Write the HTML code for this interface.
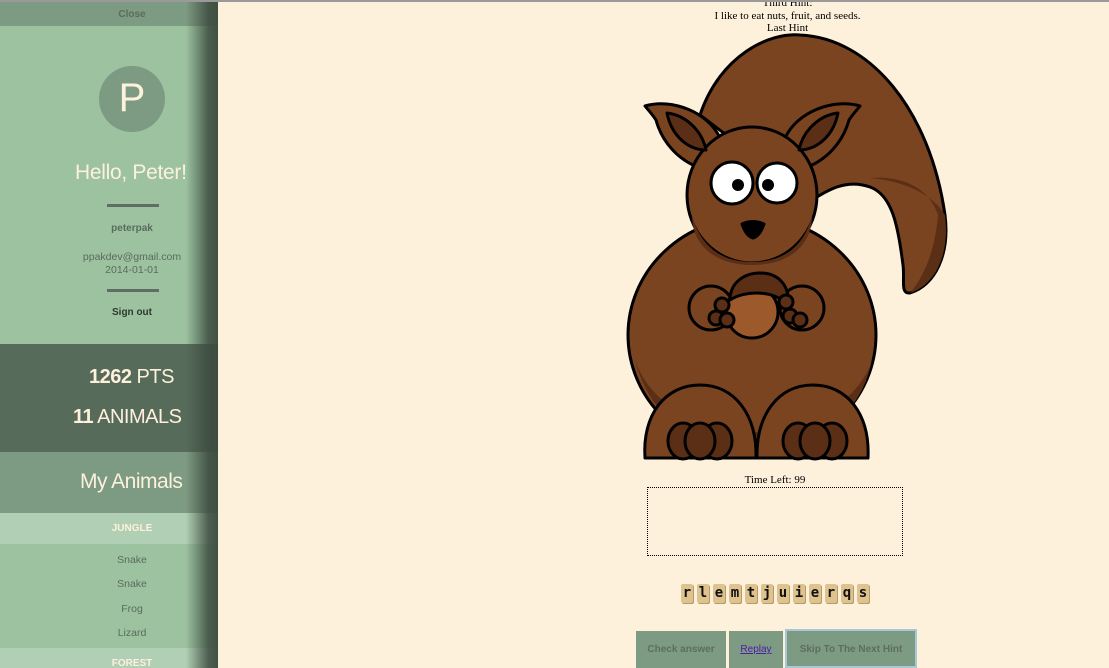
<!DOCTYPE html>
<html><head><meta charset="utf-8"><style>
*{margin:0;padding:0;box-sizing:border-box}
body{width:1109px;height:668px;overflow:hidden;background:#fdf1dc;position:relative;font-family:"Liberation Sans",sans-serif}
.topline{position:absolute;left:0;top:0;width:1109px;height:2px;background:#9a9a9a;z-index:5}
#side{position:absolute;left:0;top:0;width:218px;height:668px;background:#9cc2a0;overflow:hidden}
.abs{position:absolute}
.c{text-align:center}
.shadow{position:absolute;left:186px;top:0;width:32px;height:668px;background:linear-gradient(to right,rgba(60,75,62,0),rgba(60,75,62,.85) 70%,rgba(60,75,62,.95));z-index:3}
.tile{display:inline-block;width:12px;height:19px;background:#dfc38e;border-radius:2px;box-shadow:1px 1px 0 #b89a66;font:bold 14px "DejaVu Sans Mono","Liberation Mono",monospace;line-height:19px;text-align:center;color:#111;margin:0 2px}
.btn{position:absolute;top:631px;height:37px;background:#7d9a82;color:#5d6e5f;font:bold 10px "Liberation Sans",sans-serif;text-align:center;line-height:37px}
</style></head><body>
<div class="topline"></div>
<div id="side">
  <div class="abs c" style="left:0;top:2px;width:264px;height:24px;background:#7d9a82;color:#5a6c5c;font-size:10px;font-weight:bold;line-height:26px">Close</div>
  <div class="abs c" style="left:99px;top:66px;width:66px;height:66px;border-radius:50%;background:#7d9a82;color:#fdf1dc;font-size:40px;line-height:64px">P</div>
  <div class="abs" style="left:75px;top:161px;color:#fdf1dc;font-size:21px;letter-spacing:-0.3px">Hello, Peter!</div>
  <div class="abs" style="left:107px;top:204px;width:52px;height:3px;background:#5f6e60"></div>
  <div class="abs c" style="left:0;top:223px;width:264px;color:#5a6c5c;font-size:10px;font-weight:bold">peterpak</div>
  <div class="abs c" style="left:0;top:251px;width:264px;color:#5a6c5c;font-size:10.5px;line-height:13px">ppakdev@gmail.com<br>2014-01-01</div>
  <div class="abs" style="left:107px;top:289px;width:52px;height:3px;background:#5f6e60"></div>
  <div class="abs c" style="left:0;top:307px;width:264px;color:#2e3a30;font-size:10px;font-weight:bold">Sign out</div>
  <div class="abs" style="left:0;top:344px;width:264px;height:108px;background:#576b5b"></div>
  <div class="abs" style="left:89px;top:366px;color:#fdf1dc;font-size:20px;letter-spacing:-0.5px"><b>1262</b> PTS</div>
  <div class="abs" style="left:73px;top:406px;color:#fdf1dc;font-size:20px;letter-spacing:-0.5px"><b>11</b> ANIMALS</div>
  <div class="abs" style="left:0;top:452px;width:264px;height:61px;background:#7d9a82"></div>
  <div class="abs" style="left:80px;top:470px;color:#fdf1dc;font-size:21px;letter-spacing:-0.5px">My Animals</div>
  <div class="abs c" style="left:0;top:513px;width:264px;height:31px;background:#b0cfb4;color:#fdf1dc;font-size:10px;font-weight:bold;line-height:31px">JUNGLE</div>
  <div class="abs c" style="left:0;top:548px;width:264px;color:#5a6c5c;font-size:10.5px;line-height:24.3px">Snake<br>Snake<br>Frog<br>Lizard</div>
  <div class="abs c" style="left:0;top:648px;width:264px;height:31px;background:#b0cfb4;color:#fdf1dc;font-size:10px;font-weight:bold;line-height:31px">FOREST</div>
  <div class="shadow"></div>
</div>
<div class="abs c" style="left:600px;top:-3px;width:375px;font-family:'Liberation Serif',serif;font-size:11px;line-height:12.5px;color:#000">Third Hint:<br>I like to eat nuts, fruit, and seeds.<br>Last Hint</div>
<svg class="abs" style="left:620px;top:0" width="340" height="470" viewBox="620 0 340 470">
<g stroke="#000" stroke-width="3" stroke-linejoin="round">
 <path d="M700,115 C720,55 770,32 800,35 C870,38 930,110 945,215 C950,255 935,285 910,293 C900,294 905,280 903,265 C898,225 892,195 870,187 C845,178 825,192 812,200 Z" fill="#7b4420"/>
 <path d="M945,215 C950,255 935,285 910,293 C925,275 935,250 938,215 C930,190 905,175 870,178 C895,180 930,190 945,215Z" fill="#5b2f15" stroke="none"/>
 <ellipse cx="752" cy="335" rx="124" ry="118" fill="#7b4420"/>
 <path d="M635,360 C650,420 700,450 752,452 C810,450 860,420 872,360 C860,400 810,430 752,432 C700,430 650,405 635,360Z" fill="#5b2f15" stroke="none"/>
 <path d="M645,106 C672,98 708,112 720,138 L700,168 C678,160 662,142 656,120 C652,114 649,111 645,106Z" fill="#7b4420"/>
 <path d="M860,106 C833,98 797,112 785,138 L805,168 C827,160 843,142 849,120 C853,114 856,111 860,106Z" fill="#7b4420"/>
 <ellipse cx="752" cy="195" rx="65" ry="68" fill="#7b4420"/>
 <path d="M692,215 C700,245 720,262 752,262 C785,262 805,245 812,215 C812,245 790,265 752,265 C715,265 692,245 692,215Z" fill="#5b2f15" stroke="none"/>
 <path d="M667,113 C685,115 702,130 706,150 C690,150 672,138 667,113Z" fill="#5b2f15"/>
 <path d="M838,113 C820,115 803,130 799,150 C815,150 833,138 838,113Z" fill="#5b2f15"/>
 <circle cx="732" cy="183" r="21" fill="#fff"/>
 <circle cx="777" cy="183" r="20" fill="#fff"/>
 <circle cx="738" cy="185" r="6" fill="#000" stroke="none"/>
 <circle cx="768" cy="185" r="6" fill="#000" stroke="none"/>
 <path d="M742,224 Q753,219 764,224 Q760,236 753,238 Q746,236 742,224Z" fill="#000"/>
 <circle cx="711" cy="308" r="22" fill="#7b4420"/>
 <circle cx="802" cy="308" r="22" fill="#7b4420"/>
 <ellipse cx="752" cy="312" rx="26" ry="26" fill="#9c5a2c"/>
 <path d="M730,300 C730,282 745,273 760,273 C778,273 790,285 788,305 C775,290 745,290 730,300Z" fill="#5b2f15"/>
 <circle cx="722" cy="305" r="7" fill="#5b2f15"/><circle cx="716" cy="318" r="7" fill="#5b2f15"/><circle cx="727" cy="320" r="7" fill="#5b2f15"/>
 <circle cx="786" cy="302" r="7" fill="#5b2f15"/><circle cx="790" cy="316" r="7" fill="#5b2f15"/><circle cx="800" cy="320" r="7" fill="#5b2f15"/>
 <path d="M645,458 C642,415 665,385 700,385 C735,385 757,415 756,458 Z" fill="#7b4420"/>
 <path d="M757,458 C756,415 778,385 813,385 C848,385 870,415 868,458 Z" fill="#7b4420"/>
 <ellipse cx="683" cy="441" rx="15" ry="18" fill="#5b2f15"/><ellipse cx="717" cy="441" rx="15" ry="18" fill="#5b2f15"/><ellipse cx="700" cy="441" rx="15" ry="18" fill="#5b2f15"/>
 <ellipse cx="798" cy="441" rx="15" ry="18" fill="#5b2f15"/><ellipse cx="832" cy="441" rx="15" ry="18" fill="#5b2f15"/><ellipse cx="815" cy="441" rx="15" ry="18" fill="#5b2f15"/>
</g></svg>
<div class="abs c" style="left:700px;top:474px;width:150px;font-family:'Liberation Serif',serif;font-size:11px">Time Left: 99</div>
<div class="abs" style="left:647px;top:487px;width:256px;height:69px;border:1px dotted #000"></div>
<div class="abs c" style="left:600px;top:584px;width:350px;white-space:nowrap"><span class="tile">r</span><span class="tile">l</span><span class="tile">e</span><span class="tile">m</span><span class="tile">t</span><span class="tile">j</span><span class="tile">u</span><span class="tile">i</span><span class="tile">e</span><span class="tile">r</span><span class="tile">q</span><span class="tile">s</span></div>
<div class="btn" style="left:636px;width:90px">Check answer</div>
<div class="btn" style="left:729px;width:54px;color:#4b1ca8;font-weight:normal;text-decoration:underline">Replay</div>
<div class="btn" style="left:785px;top:629px;width:132px;height:39px;border:2px solid #a9c8d6;line-height:37px">Skip To The Next Hint</div>
</body></html>
